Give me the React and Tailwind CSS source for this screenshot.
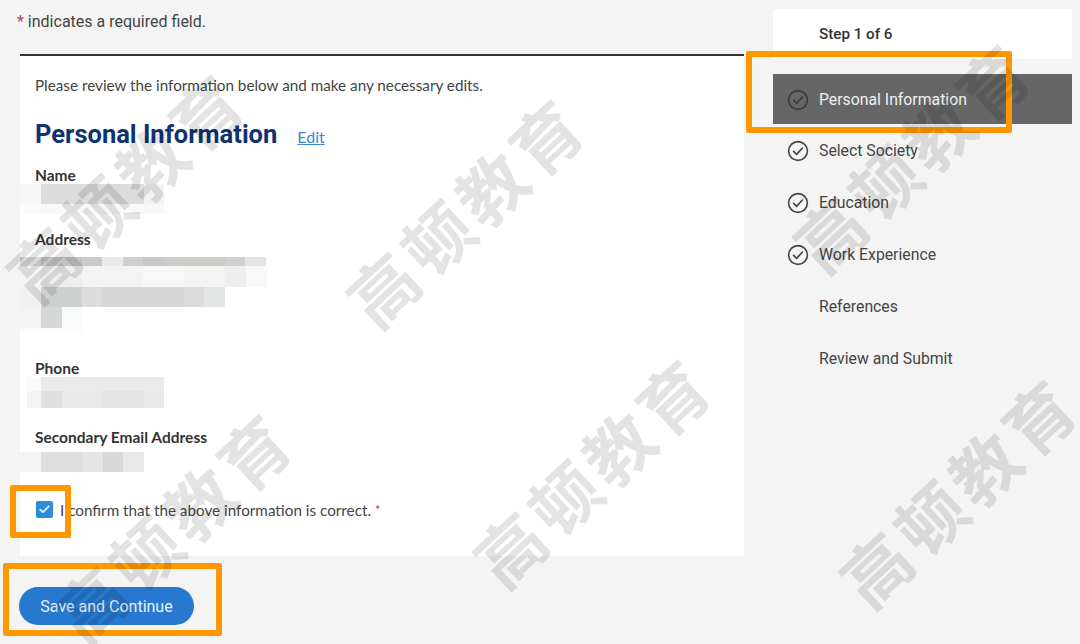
import { Check } from "lucide-react";

const lato = "font-['Lato','Liberation_Sans',sans-serif]";
const roboto = "font-['Roboto','Liberation_Sans',sans-serif]";

const steps = [
  { label: "Personal Information", done: true, active: true },
  { label: "Select Society", done: true },
  { label: "Education", done: true },
  { label: "Work Experience", done: true },
  { label: "References" },
  { label: "Review and Submit" },
];

// redacted (pixelated) fields, one entry per row of blocks
const nameBlur = [
  { h: "h-[20px]", cells: ["w-[21px] bg-[#f7f7f7]", "w-[103px] bg-[#dcdcdc]", "w-[20px] bg-[#f3f3f3]"] },
  { h: "h-[10px]", cells: ["w-[21px] bg-[#fbfbfb]", "w-[123px] bg-[#f8f8f8]"] },
];
const addressBlur = [
  {
    h: "h-[9px]",
    cells: [
      "w-[21px] bg-[#d8d8d8]", "w-[41px] bg-[#c4c4c4]", "w-[20px] bg-[#cacaca]", "w-[21px] bg-[#ebe8e8]",
      "w-[20px] bg-[#cfcfcf]", "w-[20px] bg-[#c8c8c8]", "w-[62px] bg-[#cbcbc8]", "w-[20px] bg-[#d0d0d0]", "w-[21px] bg-[#e4e4e4]",
    ],
  },
  {
    h: "h-[21px]",
    cells: [
      "w-[21px] bg-[#f4f4f4]", "w-[41px] bg-[#eeeeee]", "w-[61px] bg-[#f3f3f3]", "w-[41px] bg-[#f8f8f8]",
      "w-[41px] bg-[#f3f3f3]", "w-[21px] bg-[#eeeeee]", "w-[21px] bg-[#f8f8f8]",
    ],
  },
  {
    h: "h-[20px]",
    cells: [
      "w-[21px] bg-[#f0f0f0]", "w-[41px] bg-[#cdd0cf]", "w-[20px] bg-[#dcdcdc]", "w-[82px] bg-[#d6d6d6]",
      "w-[20px] bg-[#dcdcdc]", "w-[21px] bg-[#e4e6e6]",
    ],
  },
  { h: "h-[21px]", cells: ["w-[21px] bg-[#f3f3f3]", "w-[21px] bg-[#d5d7d5]", "w-[20px] bg-[#fafcfc]"] },
  { h: "h-[4px]", cells: ["w-[62px] bg-[#fbfbfb]"] },
];
const phoneBlur = [
  { h: "h-[14px]", cells: ["w-[7px] bg-white", "w-[14px] bg-[#fafafa]", "w-[123px] bg-[#eaeaea]"] },
  {
    h: "h-[17px]",
    cells: [
      "w-[7px] bg-white", "w-[14px] bg-[#f4f4f4]", "w-[21px] bg-[#dfdfdf]", "w-[41px] bg-[#e8e8e8]",
      "w-[41px] bg-[#e4e4e4]", "w-[20px] bg-[#e8e8e8]",
    ],
  },
];
const emailBlur = [
  {
    h: "h-[20px]",
    cells: [
      "w-[21px] bg-[#f4f4f4]", "w-[21px] bg-[#dedede]", "w-[20px] bg-[#dfdddd]", "w-[21px] bg-[#e4e6e6]",
      "w-[20px] bg-[#d8d8d8]", "w-[21px] bg-[#e8e8e8]",
    ],
  },
];

const watermarks = [
  "left-[125px] top-[185px]",
  "left-[465px] top-[210px]",
  "left-[912px] top-[155px]",
  "left-[173px] top-[525px]",
  "left-[592px] top-[470px]",
  "left-[958px] top-[490px]",
];

function Blur({ rows, className }) {
  return (
    <div className={className}>
      {rows.map((row, i) => (
        <div key={i} className={`flex ${row.h}`}>
          {row.cells.map((c, j) => (
            <div key={j} className={c} />
          ))}
        </div>
      ))}
    </div>
  );
}

function FieldLabel({ children, className }) {
  return <div className={`pl-[15px] text-[15.5px] leading-[20px] font-bold text-[#333] ${className}`}>{children}</div>;
}

function StepCheck({ className }) {
  return (
    <svg width="22" height="22" viewBox="0 0 22 22" fill="none" stroke="currentColor" strokeWidth="1.6" strokeLinecap="round" strokeLinejoin="round" className={className}>
      <circle cx="11" cy="11" r="9.4" />
      <path d="M6.6 11.4l3 3 5.8-6.4" />
    </svg>
  );
}

export default function App() {
  return (
    <div className={`relative flex h-[644px] w-[1080px] overflow-hidden bg-[#f4f4f4] ${lato}`}>
      {/* Left column */}
      <div className="w-[773px] shrink-0">
        <p className={`ml-[17px] mt-[13px] text-[16px] leading-[18px] text-[#444] ${roboto}`}>
          <span className="text-[#b5474f]">*</span> indicates a required field.
        </p>

        <div className="ml-5 mt-[23px] h-[502px] w-[724px] border-t-2 border-[#333] bg-white">
          <p className="ml-[15px] mt-[19px] text-[15.25px] leading-[20px] text-[#444]">
            Please review the information below and make any necessary edits.
          </p>
          <div className="ml-[15px] mt-[23px] flex h-[32px] items-baseline">
            <h2 className={`text-[25.5px] leading-[32px] font-bold text-[#0f3272] ${roboto}`}>Personal Information</h2>
            <a className="ml-5 text-[16px] leading-[20px] text-[#3a87d3] underline">Edit</a>
          </div>

          <FieldLabel className="mt-[15px]">Name</FieldLabel>
          <Blur rows={nameBlur} className="mt-[-1px]" />

          <FieldLabel className="mt-[15px]">Address</FieldLabel>
          <Blur rows={addressBlur} className="mt-[8px]" />

          <FieldLabel className="mt-[26px]">Phone</FieldLabel>
          <Blur rows={phoneBlur} className="mt-[-1px]" />

          <FieldLabel className="mt-[19px]">Secondary Email Address</FieldLabel>
          <Blur rows={emailBlur} className="mt-[5px]" />

          <label className="ml-4 mt-[27px] flex items-center">
            <span className="flex h-[17px] w-[17px] items-center justify-center rounded-[2px] bg-[#2f8dd8]">
              <Check size={13} strokeWidth={3} className="text-white" />
            </span>
            <span className="ml-[7px] pt-[1px] text-[15.25px] leading-[20px] text-[#444]">
              I confirm that the above information is correct. <span className="align-top text-[13px] text-[#b5474f]">*</span>
            </span>
          </label>
        </div>

        <button className={`ml-[19px] mt-[31px] h-[38px] w-[175px] rounded-full bg-[#2778cf] pt-[1px] text-[16px] text-[#e8f1fb] ${roboto}`}>
          Save and Continue
        </button>
      </div>

      {/* Steps sidebar */}
      <aside className={`mt-[9px] w-[299px] shrink-0 text-[15.8px] ${roboto}`}>
        <div className="flex h-[50px] items-center bg-white pl-[46px] pt-[1px] text-[15.2px] font-medium text-[#333]">Step 1 of 6</div>
        <ul className="mt-[15px]">
          {steps.map((s) => (
            <li
              key={s.label}
              className={`relative mb-[1.8px] flex h-[50px] items-center pl-[46px] pt-[1px] ${s.active ? "bg-[#666] text-[#f0f0f0]" : "text-[#444]"}`}
            >
              {s.done && (
                <StepCheck className={`absolute left-[14px] ${s.active ? "text-[#3a3a3a]" : "text-[#444]"}`} />
              )}
              {s.label}
            </li>
          ))}
        </ul>
      </aside>

      {/* Orange annotation boxes */}
      <div className="absolute left-[746px] top-[51px] h-[82px] w-[266px] rounded-[2px] border-[6px] border-[#ff9800]" />
      <div className="absolute left-[10px] top-[485px] h-[53px] w-[61px] rounded-[2px] border-[6px] border-[#ff9800]" />
      <div className="absolute left-[3px] top-[563px] h-[73px] w-[219px] rounded-[2px] border-[6px] border-[#ff9800]" />

      {/* Watermarks */}
      {watermarks.map((pos) => (
        <div
          key={pos}
          className={`pointer-events-none absolute ${pos} -translate-x-1/2 -translate-y-1/2 -rotate-[43deg] whitespace-nowrap text-[68px] leading-none font-bold tracking-[6px] text-black/[.11] font-['Noto_Sans_CJK_SC',sans-serif]`}
        >
          高顿教育
        </div>
      ))}
    </div>
  );
}
